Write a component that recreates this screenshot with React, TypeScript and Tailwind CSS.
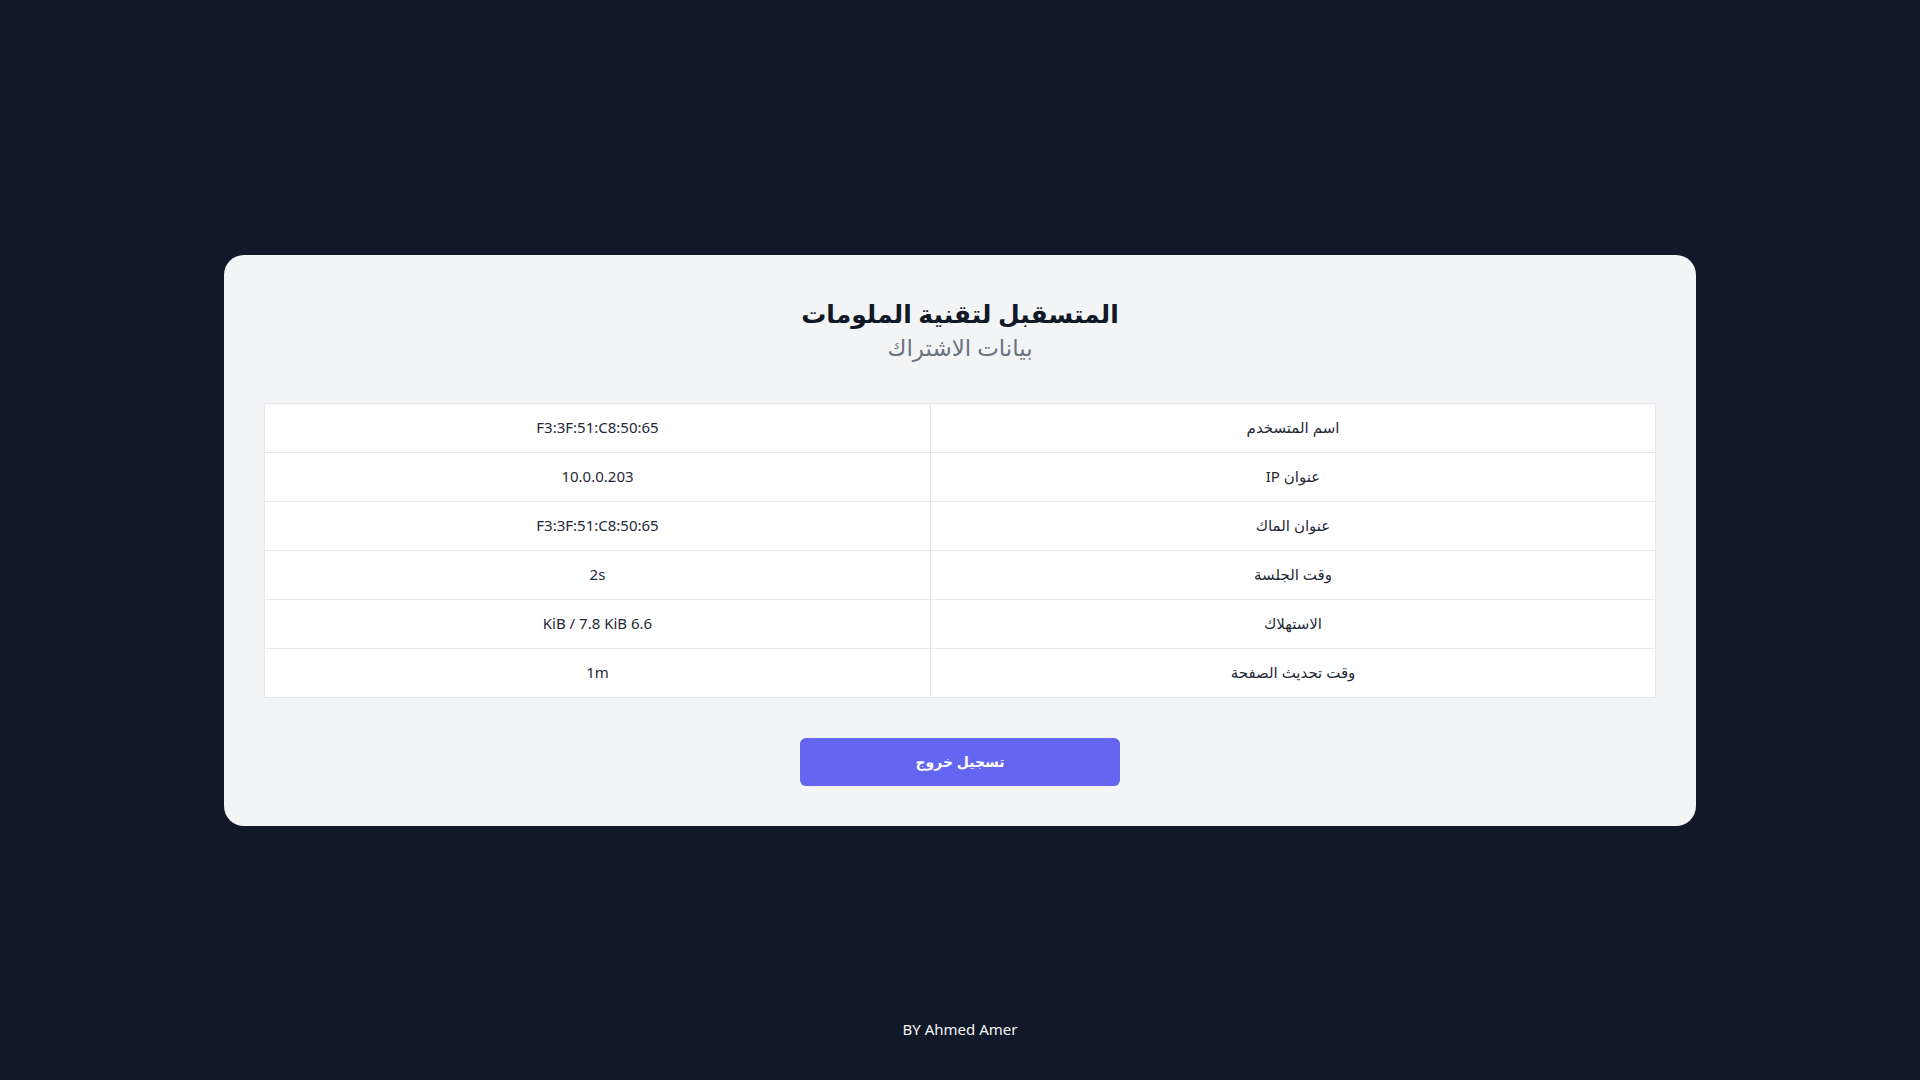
const rows = [
  { label: "اسم المتسخدم", value: "F3:3F:51:C8:50:65" },
  { label: "عنوان IP", value: "10.0.0.203" },
  { label: "عنوان الماك", value: "F3:3F:51:C8:50:65" },
  { label: "وقت الجلسة", value: "2s" },
  { label: "الاستهلاك", value: "6.6 KiB / 7.8 KiB" },
  { label: "وقت تحديث الصفحة", value: "1m" },
];

export default function App() {
  return (
    <div
      dir="rtl"
      className="h-screen flex flex-col bg-[#111827] font-['Segoe_UI','Noto_Sans','DejaVu_Sans',sans-serif]"
    >
      <div className="flex-1" />

      {/* Card */}
      <div className="w-[1472px] mx-auto rounded-[20px] bg-[#f3f4f6] p-10">
        <div className="text-center mb-10">
          <h1 className="text-[25px] leading-9 font-bold text-[#111827]">المتسقبل لتقنية الملومات</h1>
          <p className="text-[23px] leading-8 text-[#6b7280]">بيانات الاشتراك</p>
        </div>

        <table className="w-full border-collapse bg-white text-[15px] text-[#1f2937]">
          <colgroup>
            <col className="w-[725px]" />
            <col />
          </colgroup>
          <tbody>
            {rows.map((r, i) => (
              <tr key={i}>
                <td className="border border-[#e5e7eb] h-[49px] px-6 text-center">{r.label}</td>
                <td className="border border-[#e5e7eb] h-[49px] px-6 text-center">{r.value}</td>
              </tr>
            ))}
          </tbody>
        </table>

        <div className="flex justify-center mt-10">
          <button className="w-80 h-12 rounded-md bg-[#6366f1] text-white text-[14px] font-bold">
            تسجيل خروج
          </button>
        </div>
      </div>

      <div className="flex-1 flex flex-col justify-end">
        <p dir="ltr" className="mb-[39px] text-center text-[15px] leading-6 text-[#f3f4f6]">
          BY Ahmed Amer
        </p>
      </div>
    </div>
  );
}
